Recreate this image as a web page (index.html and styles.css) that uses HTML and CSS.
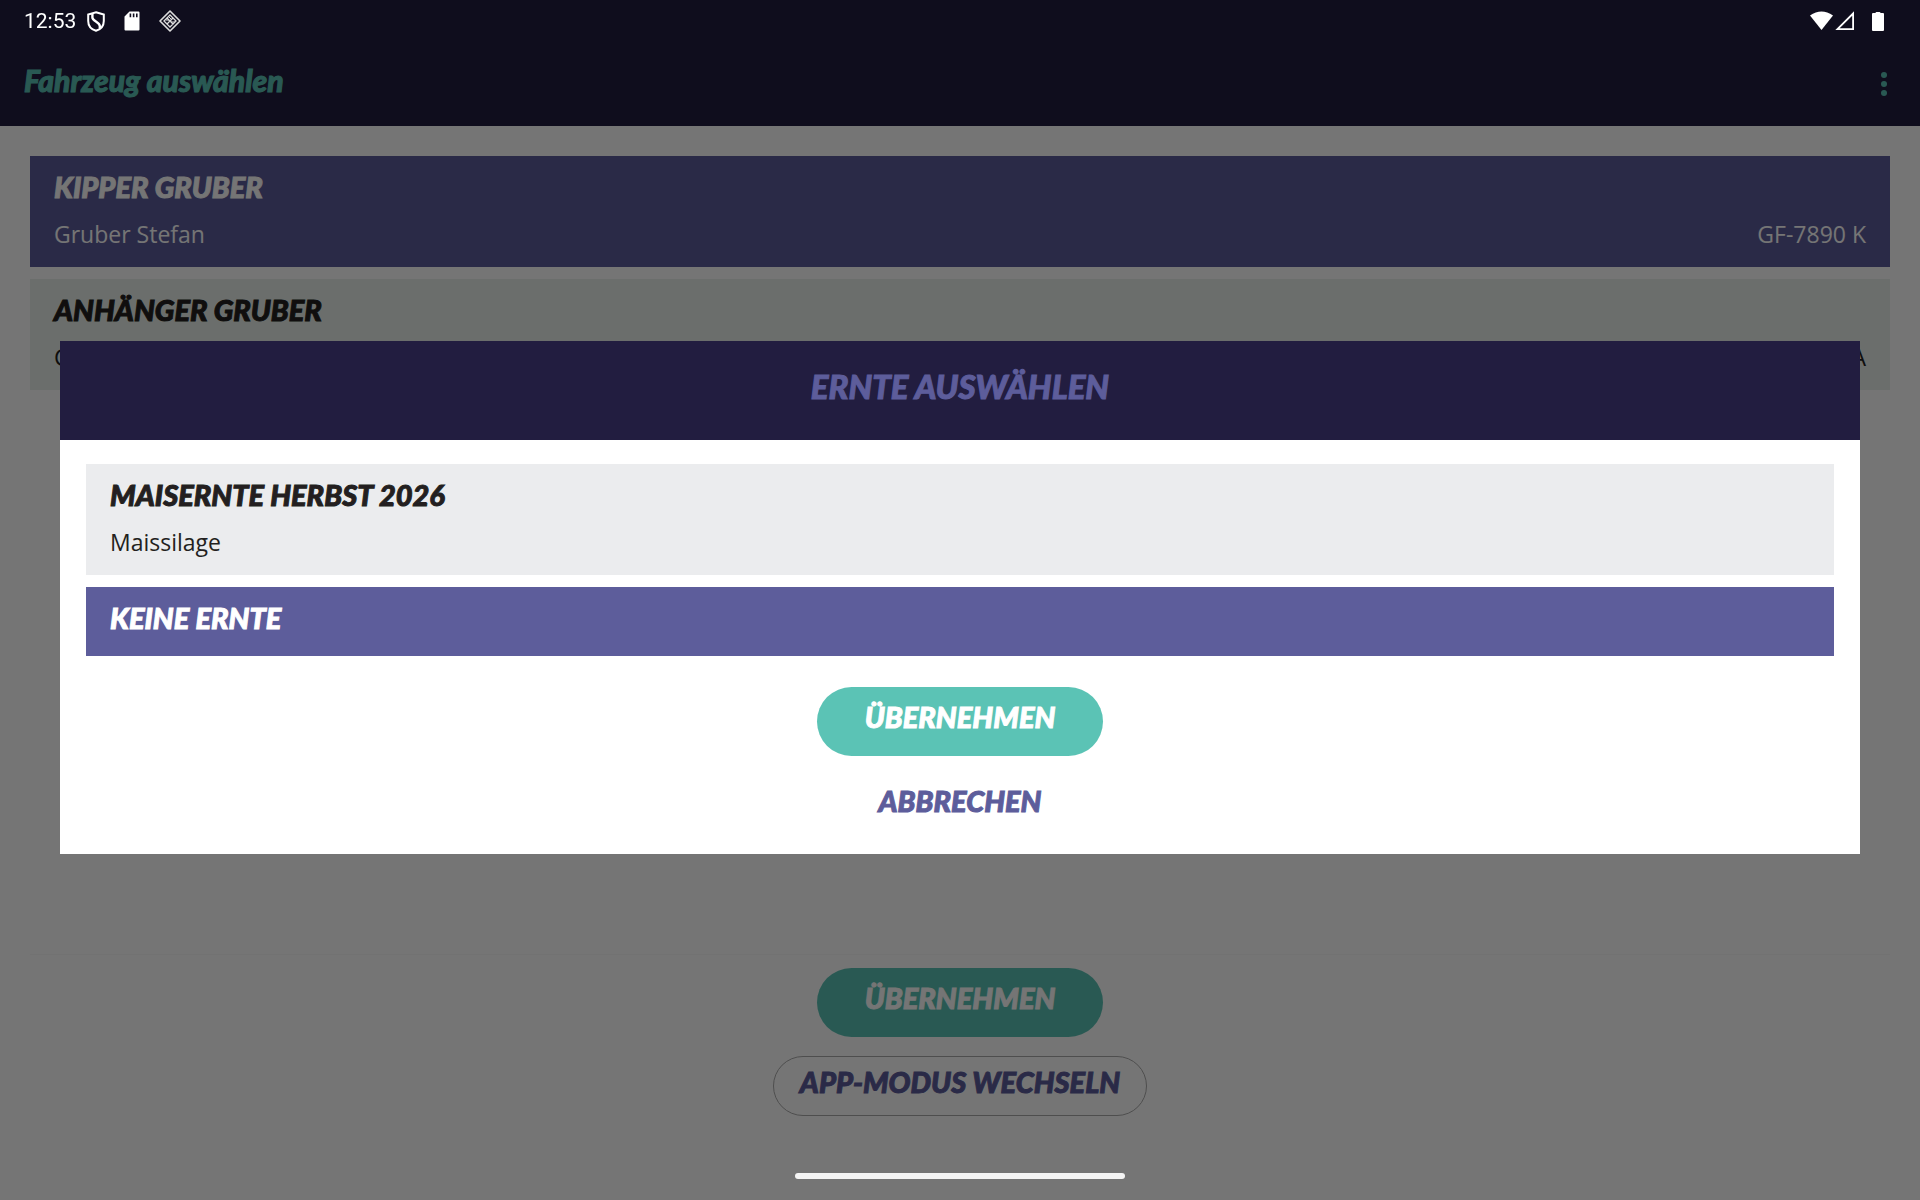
FILE: index.html
```html
<!DOCTYPE html>
<html lang="de">
<head>
<meta charset="utf-8">
<meta name="viewport" content="width=device-width, initial-scale=1">
<title>Fahrzeug auswählen</title>
<link rel="stylesheet" href="styles.css">
</head>
<body>
<div class="app">
  <header class="app-bar">
    <h1 class="app-title">Fahrzeug auswählen</h1>
    <button class="menu-button" type="button" aria-label="Menü">
      <svg width="6" height="24" viewBox="0 0 6 24" fill="currentColor"><circle cx="3" cy="3" r="3"/><circle cx="3" cy="12" r="3"/><circle cx="3" cy="21" r="3"/></svg>
    </button>
  </header>
  <main class="vehicles">
    <button class="row selected" type="button">
      <span class="row-title">KIPPER GRUBER</span>
      <span class="row-detail"><span>Gruber Stefan</span><span>GF-7890 K</span></span>
    </button>
    <button class="row vehicle" type="button">
      <span class="row-title">ANHÄNGER GRUBER</span>
      <span class="row-detail"><span>Gruber Stefan</span><span>GF-7891 A</span></span>
    </button>
  </main>
  <footer class="actions">
    <button class="pill primary" type="button">ÜBERNEHMEN</button>
    <button class="pill outline" type="button">APP-MODUS WECHSELN</button>
  </footer>
</div>

<div class="scrim">
  <section class="dialog" role="dialog" aria-modal="true" aria-labelledby="dialog-title">
    <h2 class="dialog-title" id="dialog-title">ERNTE AUSWÄHLEN</h2>
    <div class="dialog-body">
      <button class="row" type="button">
        <span class="row-title">MAISERNTE HERBST 2026</span>
        <span class="row-detail"><span>Maissilage</span></span>
      </button>
      <button class="row selected" type="button">
        <span class="row-title">KEINE ERNTE</span>
      </button>
      <div class="dialog-actions">
        <button class="pill primary" type="button">ÜBERNEHMEN</button>
        <button class="pill text" type="button">ABBRECHEN</button>
      </div>
    </div>
  </section>
</div>

<div class="status-bar">
  <div class="status-left">
    <span class="clock">12:53</span>
    <svg width="18" height="21" viewBox="0 0 18 21" fill="none" stroke="#fff" stroke-width="2"><path d="M9 1.2 16.8 3.6V10C16.8 14.8 13.6 18.4 9 19.8 4.400 18.400 1.200 14.800 1.200 10V3.600Z"/><path d="M5.400 2.500V6.500C5.400 10 12.800 11 12.800 15V17.500" stroke-width="2.400"/></svg>
    <svg width="16" height="20" viewBox="0 0 16 20"><path fill="#fff" fill-rule="evenodd" d="M5.500 0.500H14.500Q15.500 .5 15.500 1.500V18.500Q15.500 19.500 14.500 19.500H1.500Q.5 19.500 .5 18.500V5.500ZM5.600 2.500V6.200H7.200V2.500ZM8.800 2.500V6.200H10.400V2.500ZM12 2.500V6.200H13.600V2.500Z"/></svg>
    <svg width="22" height="22" viewBox="0 0 22 22" fill="none" stroke="#ddd"><path d="M11 1 21 11 11 21 1 11Z" stroke-width="1.600" stroke-linejoin="round"/><path d="M11 5 8 8 11 11 14 8ZM8 8 5 11 8 14 11 11ZM14 8 17 11 14 14 11 11ZM11 11 8 14 11 17 14 14Z" stroke-width="1.300"/><path d="M9 6 13 10M6 12 10 16M12 12 16 12M7 10H10" stroke-width="1"/></svg>
  </div>
  <div class="status-right">
    <svg width="48" height="20" viewBox="0 0 48 20"><path fill="#fff" d="M0 4.500Q11.500-3.500 23 4.500L11.500 19Z"/><path fill="none" stroke="#fff" stroke-width="1.800" d="M27.500 18.100H43.100V2.500Z"/></svg>
    <svg width="12" height="19" viewBox="0 0 12 19"><path fill="#fff" d="M1 1H3.500Q3.500 0 4.500 0H7.500Q8.500 0 8.500 1H11Q12 1 12 2V18Q12 19 11 19H1Q0 19 0 18V2Q0 1 1 1Z"/></svg>
  </div>
</div>
<div class="home-indicator"></div>
</body>
</html>
```
FILE: styles.css
```css
* { box-sizing: border-box; }

body {
  margin: 0;
  background: #fff;
  color: #231f20;
  font-family: "Open Sans", sans-serif;
}

h1, h2 { margin: 0; }

button {
  border: 0;
  padding: 0;
  background: none;
  color: inherit;
  font: inherit;
}

svg { display: block; flex: none; }

.app-title, .row-title, .pill, .dialog-title {
  font-family: Lato, sans-serif;
  font-weight: 900;
  font-style: italic;
  -webkit-text-stroke: 1px currentColor;
}

.app {
  display: flex;
  flex-direction: column;
  min-height: 100vh;
}

.app-bar {
  display: flex;
  justify-content: space-between;
  align-items: center;
  height: 126px;
  padding: 42px 33px 0 24px;
  background: #221d40;
  color: #5bc3b5;
}

.app-title {
  padding-bottom: 8px;
  font-size: 30px;
  line-height: 36px;
}

.vehicles {
  display: flex;
  flex: 1;
  flex-direction: column;
  gap: 12px;
  margin: 0 30px;
  padding: 30px 0;
  border-bottom: 1px solid #f8f8f8;
}

.row {
  display: flex;
  flex-direction: column;
  gap: 12px;
  width: 100%;
  padding: 11px 24px 18px;
  background: #ebecee;
  text-align: left;
}

.row.vehicle { background: #e9efeb; }
.row.selected { background: #5d5d9b; color: #fff; }

.row-title {
  font-size: 29px;
  line-height: 40px;
}

.row-detail {
  display: flex;
  justify-content: space-between;
  width: 100%;
  font-size: 23px;
  line-height: 30px;
}

.actions {
  display: flex;
  flex-direction: column;
  align-items: center;
  gap: 19px;
  padding: 13px 24px 84px;
}

.pill {
  padding: 8px 48px 17px;
  border-radius: 35px;
  font-size: 29px;
  line-height: 44px;
}

.pill.primary { background: #5bc3b5; color: #fff; }
.pill.outline {
  padding: 3px 26px 11px;
  border: 1px solid #aaa;
  color: #5d5d9b;
}
.pill.text { color: #5d5d9b; }

.scrim {
  position: fixed;
  inset: 0;
  display: flex;
  align-items: center;
  padding: 0 60px 5px;
  background: rgba(0, 0, 0, .54);
}

.dialog {
  flex: 1;
  background: #fff;
}

.dialog-title {
  padding: 23px 24px 32px;
  background: #221d40;
  color: #5d5d9b;
  font-size: 33px;
  line-height: 44px;
  text-align: center;
}

.dialog-body {
  display: flex;
  flex-direction: column;
  gap: 12px;
  padding: 24px 26px 14px;
}

.dialog-actions {
  display: flex;
  flex-direction: column;
  align-items: center;
  gap: 15px;
  padding-top: 19px;
}

.status-bar {
  position: fixed;
  inset: 0 0 auto;
  display: flex;
  justify-content: space-between;
  align-items: center;
  height: 42px;
  padding: 0 36px 0 24px;
  color: #fff;
}

.status-left { display: flex; align-items: center; gap: 19px; }
.status-right { display: flex; align-items: center; gap: 14px; }

.clock {
  margin-right: -8px;
  font-family: Roboto, sans-serif;
  font-size: 21px;
  line-height: 24px;
}

.home-indicator {
  position: fixed;
  bottom: 21px;
  left: 50%;
  width: 330px;
  height: 6px;
  margin-left: -165px;
  border-radius: 3px;
  background: #f4f4f4;
}
```
